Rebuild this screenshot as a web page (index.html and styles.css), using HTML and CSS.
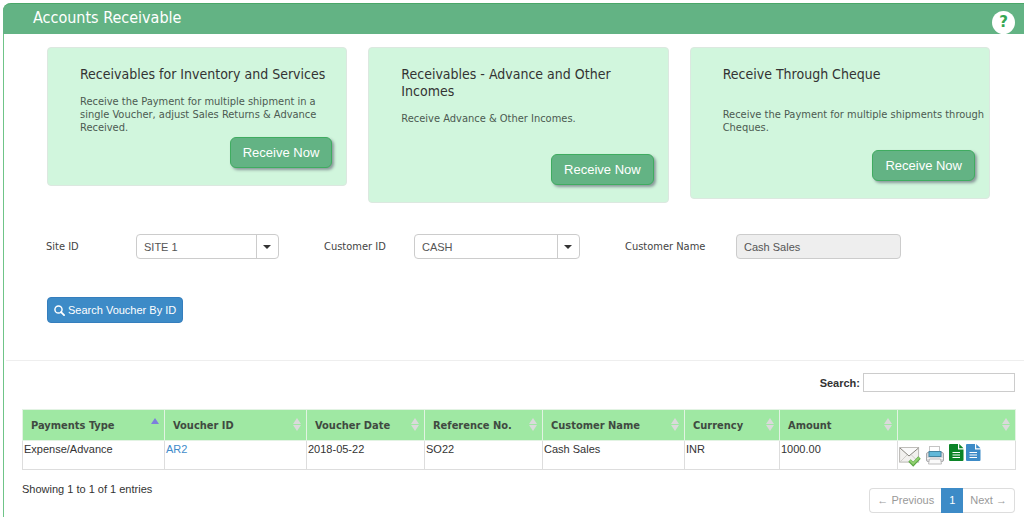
FILE: index.html
```html
<!DOCTYPE html>
<html lang="en">
<head>
<meta charset="utf-8">
<title>Accounts Receivable</title>
<link rel="stylesheet" href="styles.css">
</head>
<body>
<main class="panel">
  <header class="panel-header">
    <h1 class="panel-title">Accounts Receivable</h1>
    <button class="help" type="button" aria-label="Help">?</button>
  </header>

  <section class="cards">
    <article class="card">
      <h2 class="card-title">Receivables for Inventory and Services</h2>
      <p class="card-text">Receive the Payment for multiple shipment in a single Voucher, adjust Sales Returns &amp; Advance Received.</p>
      <button class="receive" type="button">Receive Now</button>
    </article>
    <article class="card">
      <h2 class="card-title">Receivables - Advance and Other Incomes</h2>
      <p class="card-text">Receive Advance &amp; Other Incomes.</p>
      <button class="receive" type="button">Receive Now</button>
    </article>
    <article class="card card-spaced">
      <h2 class="card-title">Receive Through Cheque</h2>
      <p class="card-text">Receive the Payment for multiple shipments through Cheques.</p>
      <button class="receive" type="button">Receive Now</button>
    </article>
  </section>

  <form class="filters">
    <div class="field">
      <label class="field-label" for="site">Site ID</label>
      <span class="combo"><select class="control" id="site"><option>SITE 1</option></select></span>
    </div>
    <div class="field">
      <label class="field-label" for="customer">Customer ID</label>
      <span class="combo"><select class="control" id="customer"><option>CASH</option></select></span>
    </div>
    <div class="field field-wide">
      <label class="field-label" for="name">Customer Name</label>
      <input class="control" id="name" type="text" value="Cash Sales" readonly>
    </div>
  </form>

  <button class="voucher-search" type="button">
    <svg class="voucher-icon" viewBox="0 0 12 12" aria-hidden="true"><circle cx="4.9" cy="4.9" r="3.900" fill="none" stroke="#fff" stroke-width="1.600"/><path d="M7.700 7.700L11 11" stroke="#fff" stroke-width="2" stroke-linecap="round"/></svg>
    Search Voucher By ID
  </button>

  <hr class="divider">

  <section class="listing">
    <div class="table-search">
      <label class="search-label" for="search">Search:</label>
      <input class="search-input" id="search" type="text">
    </div>
    <table class="vouchers">
      <colgroup>
        <col class="col-l"><col class="col-l"><col class="col-m"><col class="col-m"><col class="col-l"><col class="col-s"><col class="col-m"><col class="col-m">
      </colgroup>
      <thead>
        <tr>
          <th class="sorted">Payments Type</th><th>Voucher ID</th><th>Voucher Date</th><th>Reference No.</th><th>Customer Name</th><th>Currency</th><th>Amount</th><th></th>
        </tr>
      </thead>
      <tbody>
        <tr>
          <td>Expense/Advance</td>
          <td><a class="link" href="#">AR2</a></td>
          <td>2018-05-22</td>
          <td>SO22</td>
          <td>Cash Sales</td>
          <td>INR</td>
          <td>1000.00</td>
          <td>
            <div class="actions">
              <button class="action action-mail" type="button" aria-label="Email">
                <svg width="22" height="21" viewBox="0 0 22 21"><rect x=".6" y="1.6" width="19" height="14.5" fill="#f1f0ee" stroke="#b9b7b3"/><path d="M1 16l7-7M19.5 16l-7-7" stroke="#cfcdc9" fill="none"/><path d="M1 2l9 8 9.500-8" fill="#fafafa" stroke="#88867f"/><path d="M10.500 14.500l3.700 3.700L20.500 11.500" fill="none" stroke="#5ba645" stroke-width="3.400"/><path d="M11 14.500l3.200 3.100L20 11.700" fill="none" stroke="#8fd06e" stroke-width="2"/></svg>
              </button>
              <button class="action action-print" type="button" aria-label="Print">
                <svg width="18" height="19" viewBox="0 0 18 19"><rect x="3.500" y=".5" width="10" height="6" fill="#fff" stroke="#c4c4c4"/><rect x=".5" y="6.500" width="17" height="9" rx="1.500" fill="#dcdcde" stroke="#a8a8aa"/><rect x="3" y="5.500" width="12" height="5" fill="#62b8d8" stroke="#43849f"/><path d="M1 12.500h16" stroke="#f5f5f5"/><path d="M3.500 13h11l1 5h-13z" fill="#fafafa" stroke="#bdbdbd"/></svg>
              </button>
              <button class="action action-green" type="button" aria-label="View document">
                <svg width="15" height="17" viewBox="0 0 15 17"><path d="M1 0h8v5.500h5.500V16a1 1 0 0 1-1 1H1a1 1 0 0 1-1-1V1a1 1 0 0 1 1-1z" fill="currentColor"/><path d="M10.200 0l4.300 4.300h-4.300z" fill="currentColor"/><path d="M3.500 8.500h7.500M3.500 11h7.500M3.500 13.500h7.500" stroke="#fff" stroke-width="1.200"/></svg>
              </button>
              <button class="action action-blue" type="button" aria-label="Copy document">
                <svg width="15" height="17" viewBox="0 0 15 17"><path d="M1 0h8v5.500h5.500V16a1 1 0 0 1-1 1H1a1 1 0 0 1-1-1V1a1 1 0 0 1 1-1z" fill="currentColor"/><path d="M10.200 0l4.300 4.300h-4.300z" fill="currentColor"/><path d="M3.500 8.500h7.500M3.500 11h7.500M3.500 13.500h7.500" stroke="#fff" stroke-width="1.200"/></svg>
              </button>
            </div>
          </td>
        </tr>
      </tbody>
    </table>
    <footer class="listing-footer">
      <p class="info">Showing 1 to 1 of 1 entries</p>
      <nav class="pager" aria-label="Pages">
        <a class="page" href="#">← Previous</a><a class="page page-current" href="#">1</a><a class="page" href="#">Next →</a>
      </nav>
    </footer>
  </section>
</main>
</body>
</html>
```

FILE: styles.css
```css
* { box-sizing: border-box; }

body {
  margin: 0;
  padding: 3px 0 0 3px;
  background: #fff;
  color: #333;
  font-family: "Liberation Sans", Arial, sans-serif;
  font-size: 11px;
}

h1, h2, p { margin: 0; font-weight: normal; }

button, input, select { font-family: inherit; }

.panel {
  min-height: calc(100vh - 3px);
  border-left: 1px solid #6fc488;
  border-top-left-radius: 8px;
}

.panel-header {
  display: flex;
  justify-content: space-between;
  align-items: flex-start;
  height: 31px;
  margin-left: -1px;
  padding: 4px 9px 0 30px;
  background: #63b384;
  border-top: 1px solid #4aa768;
  border-top-left-radius: 8px;
}

.panel-title {
  color: #fff;
  font: 16px/20px "DejaVu Sans Condensed", "DejaVu Sans", sans-serif;
}

.help {
  width: 23px;
  height: 23px;
  margin-top: 3px;
  padding: 0;
  border: 0;
  border-radius: 50%;
  background: #fff;
  color: #35a853;
  font: bold 15px/23px "DejaVu Sans", sans-serif;
}

.cards {
  display: grid;
  grid-template-columns: repeat(3, 1fr);
  gap: 21px;
  align-items: start;
  height: 156px;
  margin: 13px 34px 31px 43px;
}

.card {
  display: flex;
  flex-direction: column;
  padding: 18px 14px 17px 32px;
  border: 1px solid #dce8e0;
  border-radius: 4px;
  background: #d1f6dd;
  font-family: "DejaVu Sans Condensed", "DejaVu Sans", sans-serif;
}

.card-title { margin-bottom: 12px; font-size: 14px; line-height: 17px; }

.card-text {
  min-height: 39px;
  margin-bottom: 3px;
  color: #4c5a51;
  font-size: 11px;
  line-height: 13px;
}

.card-spaced .card-title { margin-bottom: 25px; }
.card-spaced .card-text { margin-right: -12px; }

.receive {
  align-self: flex-end;
  height: 31px;
  padding: 0 12px;
  border: 1px solid #3fac60;
  border-radius: 6px;
  background: #63b384;
  box-shadow: 2px 2px 3px #899;
  color: #fff;
  font-family: "Liberation Sans", Arial, sans-serif;
  font-size: 13px;
}

.filters {
  display: grid;
  grid-template-columns: 233fr 256fr 276fr;
  gap: 45px;
  margin: 0 123px 38px 42px;
}

.field { display: flex; align-items: center; min-width: 0; }

.field-label {
  flex: 0 0 90px;
  color: #444;
  font-family: "DejaVu Sans Condensed", "DejaVu Sans", sans-serif;
  font-size: 11px;
}

.field-wide .field-label { flex-basis: 111px; }

.combo { position: relative; flex: 1; display: flex; }

.combo::before {
  content: "";
  position: absolute;
  top: 1px;
  bottom: 1px;
  right: 22px;
  border-left: 1px solid #ccc;
}

.combo::after {
  content: "";
  position: absolute;
  top: 11px;
  right: 8px;
  border: 4px solid transparent;
  border-top-color: #333;
  border-bottom: 0;
  pointer-events: none;
}

.control {
  flex: 1;
  min-width: 0;
  height: 25px;
  padding: 0 7px;
  border: 1px solid #ccc;
  border-radius: 4px;
  background: #fff;
  color: #555;
  font-size: 11px;
  appearance: none;
}

.control:read-only:is(input) { background: #eee; }

.voucher-search {
  display: flex;
  align-items: center;
  gap: 3px;
  height: 26px;
  margin-left: 43px;
  padding: 0 6px;
  border: 1px solid #357ebd;
  border-radius: 4px;
  background: #3d8bc7;
  color: #fff;
  font-size: 11px;
}

.voucher-icon { width: 11px; height: 11px; }

.divider {
  margin: 37px 0 12px 2px;
  border: 0;
  border-top: 1px solid #eee;
}

.listing { padding: 0 9px 0 18px; }

.table-search {
  display: flex;
  justify-content: flex-end;
  align-items: center;
  gap: 3px;
  margin-bottom: 17px;
}

.search-label { font-size: 11px; font-weight: bold; }

.search-input {
  width: 152px;
  height: 19px;
  padding: 0 4px;
  border: 1px solid #ccc;
  font-size: 11px;
}

.vouchers {
  width: 100%;
  table-layout: fixed;
  border-collapse: collapse;
}

.col-l { width: 142px; }
.col-m { width: 118px; }
.col-s { width: 95px; }

.vouchers th {
  position: relative;
  height: 31px;
  padding: 2px 8px 0;
  border: 1px solid #e2f3e3;
  background: #9fe8a3;
  color: #404a41;
  font: bold 11px/16px "DejaVu Sans Condensed", "DejaVu Sans", sans-serif;
  text-align: left;
  white-space: nowrap;
}

.vouchers th::before,
.vouchers th::after {
  content: "";
  position: absolute;
  right: 5px;
  border: 4px solid transparent;
}

.vouchers th::before { top: 8px; border-top: 0; border-bottom: 6px solid #dadada; }
.vouchers th::after { top: 15px; border-bottom: 0; border-top: 6px solid #dadada; }
.vouchers .sorted::before { border-bottom-color: #7d7fdc; }
.vouchers .sorted::after { display: none; }

.vouchers td {
  height: 29px;
  padding: 2px 1px 0;
  border: 1px solid #ddd;
  font-size: 11px;
  line-height: 13px;
  vertical-align: top;
}

.link { color: #428bca; text-decoration: none; }

.actions { display: flex; align-items: flex-start; height: 24px; }

.action { padding: 0; border: 0; background: none; line-height: 0; }
.action-mail { margin: 3px 5px 0 0; }
.action-print { margin: 3px 5px 0 0; }
.action-green { margin: 1px 2px 0 0; color: #0b8427; }
.action-blue { margin-top: 1px; color: #3d8bc7; }

.listing-footer {
  display: flex;
  justify-content: space-between;
  align-items: flex-start;
  padding-top: 12px;
}

.info { line-height: 14px; }

.pager { display: flex; margin-top: 6px; color: #999; }

.page {
  padding: 0 7px;
  border: 1px solid #ddd;
  border-width: 1px 0;
  color: #999;
  line-height: 23px;
  text-decoration: none;
}

.page:first-child { border-left-width: 1px; border-radius: 4px 0 0 4px; }
.page:last-child { border-right-width: 1px; border-radius: 0 4px 4px 0; }
.page-current { padding: 0 8px; border-color: #3d8bc7; background: #3d8bc7; color: #fff; }
```
